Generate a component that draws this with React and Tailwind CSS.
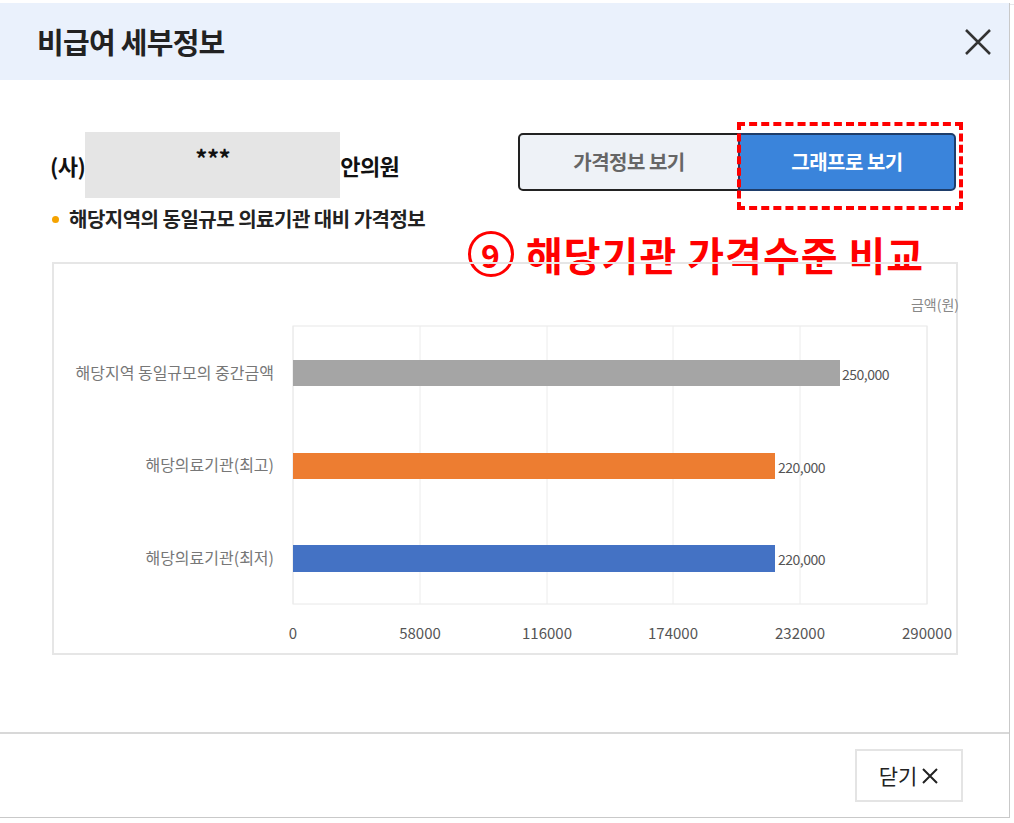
export default function App() {
  const f = { fontFamily: '"Noto Sans CJK KR", "Noto Sans", sans-serif' };
  const xs = [291, 418, 545, 671, 798, 925];
  const labels = ["0", "58000", "116000", "174000", "232000", "290000"];
  return (
    <div className="w-[1014px] h-[823px] bg-white relative overflow-hidden" style={f}>
      <div className="h-[5px] bg-white border-b border-gray-200"></div>
      <div className="absolute left-0 top-[3px] w-[1010px] h-[815px] border-r border-b border-[#c9c9c9] bg-white flex flex-col">
        <div className="h-[77px] bg-[#eaf1fc] flex items-center justify-between pl-[37px] pr-[16px]">
          <div className="text-[29px] font-bold text-[#222] tracking-tight">비급여 세부정보</div>
          <svg width="30" height="30" viewBox="0 0 30 30"><path d="M3 3L27 27M27 3L3 27" stroke="#333" strokeWidth="2.5" /></svg>
        </div>
        <div className="relative flex-1">
          <div className="absolute left-[50px] top-[52px] flex items-center text-[22px] font-bold text-[#111] tracking-tight">
            <span>(사)</span>
            <span className="w-[255px] h-[66px] bg-[#e5e5e5] flex justify-center pt-[8px] text-[24px]">***</span>
            <span>안의원</span>
          </div>
          <div className="absolute left-[518px] top-[53px] flex">
            <div className="w-[222px] h-[58px] border-2 border-[#222] rounded-l-[5px] bg-[#eef2f7] flex items-center justify-center text-[20px] font-bold text-[#666] tracking-tight">가격정보 보기</div>
            <div className="w-[218px] h-[58px] -ml-[2px] bg-[#3a84db] rounded-r-[5px] border-2 border-[#1e3d6a] flex items-center justify-center text-[20px] font-bold text-white tracking-tight">그래프로 보기</div>
          </div>
          <div className="absolute left-[737px] top-[42px] w-[226px] h-[88px] border-[4px] border-dashed border-[#ff0000]"></div>
          <div className="absolute left-[52px] top-[124px] flex items-center gap-[10px] text-[20px] font-bold text-[#222] tracking-tight">
            <span className="w-[7px] h-[7px] rounded-full bg-[#f5a300]"></span>
            해당지역의 동일규모 의료기관 대비 가격정보
          </div>
          <div className="absolute left-[468px] top-[144px] flex items-center gap-[12px] text-[40px] font-bold text-[#ff0000] tracking-wide">
            <span className="w-[46px] h-[46px] rounded-full border-[3px] border-[#ff0000] flex items-center justify-center text-[32px] leading-none">9</span>
            해당기관 가격수준 비교
          </div>
          <div className="absolute left-[52px] top-[182px] w-[906px] h-[393px] border-2 border-[#e6e6e6]">
            <svg width="906" height="393" className="absolute left-0 top-0" style={{ fontFamily: '"Noto Sans CJK KR", sans-serif' }}>
              <g transform="translate(-52,-263)">
                <text x="957" y="309" fontSize="14" fill="#888" textAnchor="end">금액(원)</text>
                <rect x="291" y="325" width="634" height="278" fill="none" stroke="#e8e8e8" />
                {xs.map((x) => <line key={x} x1={x} y1="325" x2={x} y2="603" stroke="#ececec" />)}
                <rect x="291" y="359" width="547" height="26" fill="#a5a5a5" />
                <rect x="291" y="452" width="482" height="26" fill="#ed7d31" />
                <rect x="291" y="544" width="482" height="27" fill="#4472c4" />
                <text x="840" y="379" fontSize="14" fill="#555" letterSpacing="-0.5">250,000</text>
                <text x="776" y="472" fontSize="14" fill="#555" letterSpacing="-0.5">220,000</text>
                <text x="776" y="564" fontSize="14" fill="#555" letterSpacing="-0.5">220,000</text>
                <text x="272" y="378" fontSize="16" fill="#777" textAnchor="end">해당지역 동일규모의 중간금액</text>
                <text x="272" y="470" fontSize="16" fill="#777" textAnchor="end">해당의료기관(최고)</text>
                <text x="272" y="563" fontSize="16" fill="#777" textAnchor="end">해당의료기관(최저)</text>
                {xs.map((x, i) => <text key={i} x={x} y="638" fontSize="15" fill="#555" textAnchor="middle">{labels[i]}</text>)}
              </g>
            </svg>
          </div>
        </div>
        <div className="h-[85px] border-t-2 border-[#d8d8d8] flex items-center justify-end pr-[46px]">
          <div className="w-[108px] h-[53px] border-2 border-[#e4e4e4] flex items-center justify-center text-[21px] text-[#222] gap-1">
            닫기
            <svg width="18" height="18" viewBox="0 0 18 18"><path d="M2 2L16 16M16 2L2 16" stroke="#222" strokeWidth="2" /></svg>
          </div>
        </div>
      </div>
    </div>
  );
}
